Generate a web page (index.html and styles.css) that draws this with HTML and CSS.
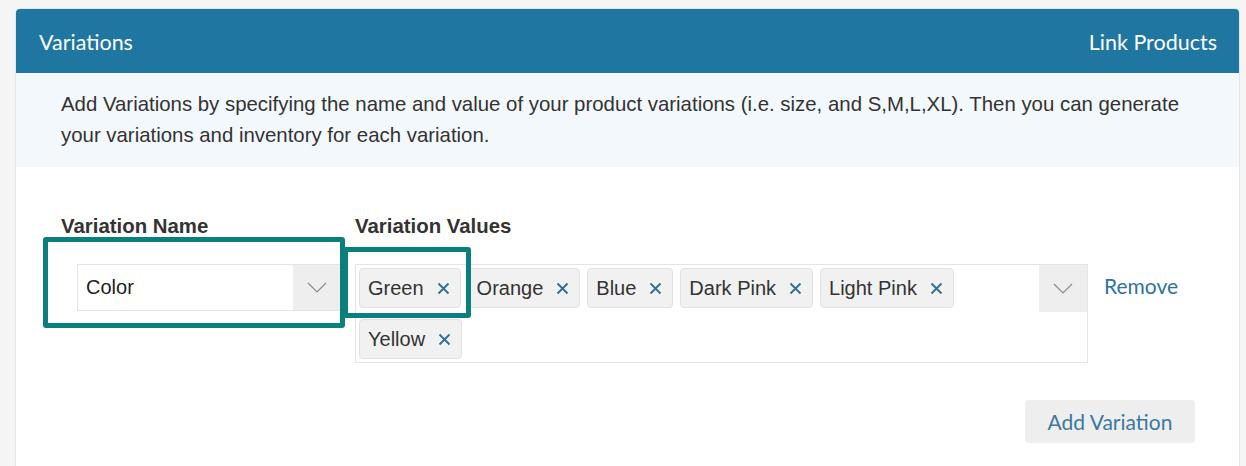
FILE: index.html
```html
<!DOCTYPE html>
<html>
<head>
<meta charset="utf-8">
<link rel="stylesheet" href="styles.css">
</head>
<body>
<div class="card">
  <div class="card-header">
    <span class="title">Variations</span>
    <span class="link">Link Products</span>
  </div>
  <div class="info">
    Add Variations by specifying the name and value of your product variations (i.e. size, and S,M,L,XL). Then you can generate your variations and inventory for each variation.
  </div>
  <div class="card-body">
    <div class="row">
      <div class="col-name">
        <div class="label">Variation Name</div>
        <div class="select">
          <span class="select-value">Color</span>
          <span class="select-arrow">
            <svg width="20" height="11" viewBox="0 0 20 11"><polyline points="1,1 10,10 19,1" fill="none" stroke="#8a8a8a" stroke-width="1.2"/></svg>
          </span>
        </div>
      </div>
      <div class="col-values">
        <div class="label">Variation Values</div>
        <div class="multi">
          <div class="tags">
            <span class="tag">Green<svg class="x" width="13" height="13" viewBox="0 0 13 13"><path d="M1.5 1.5L11.5 11.5M11.5 1.5L1.5 11.5" stroke="#2c6f93" stroke-width="1.8"/></svg></span>
            <span class="tag">Orange<svg class="x" width="13" height="13" viewBox="0 0 13 13"><path d="M1.5 1.5L11.5 11.5M11.5 1.5L1.5 11.5" stroke="#2c6f93" stroke-width="1.8"/></svg></span>
            <span class="tag">Blue<svg class="x" width="13" height="13" viewBox="0 0 13 13"><path d="M1.5 1.5L11.5 11.5M11.5 1.5L1.5 11.5" stroke="#2c6f93" stroke-width="1.8"/></svg></span>
            <span class="tag">Dark Pink<svg class="x" width="13" height="13" viewBox="0 0 13 13"><path d="M1.5 1.5L11.5 11.5M11.5 1.5L1.5 11.5" stroke="#2c6f93" stroke-width="1.8"/></svg></span>
            <span class="tag">Light Pink<svg class="x" width="13" height="13" viewBox="0 0 13 13"><path d="M1.5 1.5L11.5 11.5M11.5 1.5L1.5 11.5" stroke="#2c6f93" stroke-width="1.8"/></svg></span>
            <span class="tag">Yellow<svg class="x" width="13" height="13" viewBox="0 0 13 13"><path d="M1.5 1.5L11.5 11.5M11.5 1.5L1.5 11.5" stroke="#2c6f93" stroke-width="1.8"/></svg></span>
          </div>
          <span class="multi-arrow">
            <svg width="20" height="11" viewBox="0 0 20 11"><polyline points="1,1 10,10 19,1" fill="none" stroke="#8a8a8a" stroke-width="1.2"/></svg>
          </span>
        </div>
      </div>
      <a class="remove">Remove</a>
    </div>
    <div class="actions">
      <button class="add-btn">Add Variation</button>
    </div>
  </div>
</div>
<div class="highlight hl-name"></div>
<div class="highlight hl-green"></div>
</body>
</html>
```
FILE: styles.css
```css
html, body {
  margin: 0;
  padding: 0;
}
body {
  background: #f5f5f5;
  padding: 8px 6px 0 15px;
  font-family: "Liberation Sans", Arial, sans-serif;
  color: #333;
  position: relative;
  height: 466px;
  box-sizing: border-box;
  overflow: hidden;
}
.card {
  background: #fff;
  border: 1px solid #e2e6ea;
  border-radius: 5px;
  overflow: hidden;
  height: 600px;
}
.card-header {
  background: #1f76a0;
  height: 64px;
  padding: 1px 22px 0 23px;
  box-sizing: border-box;
  display: flex;
  align-items: center;
  justify-content: space-between;
  font-family: Lato, "Open Sans", sans-serif;
  font-size: 21.5px;
  color: #fff;
}
.info {
  background: #f3f8fc;
  padding: 16px 44px 16px 45px;
  font-size: 20.4px;
  line-height: 31px;
  color: #333;
}
.card-body {
  padding: 46px 44px 0 45px;
}
.row {
  display: flex;
  align-items: flex-start;
}
.label {
  font-weight: bold;
  font-size: 20.4px;
  line-height: 26px;
  color: #333;
  margin-bottom: 25px;
}
.col-name {
  width: 294px;
}
.select {
  margin-left: 16px;
  margin-top: 1px;
  width: 265px;
  height: 47px;
  box-sizing: border-box;
  border: 1px solid #e4e4e4;
  display: flex;
  align-items: stretch;
}
.select-value {
  flex: 1;
  padding-left: 8px;
  display: flex;
  align-items: center;
  font-size: 20px;
  color: #222;
}
.select-arrow {
  width: 48px;
  background: #eeeeee;
  display: flex;
  align-items: center;
  justify-content: center;
}
.col-values {
  width: 733px;
}
.multi {
  border: 1px solid #e4e4e4;
  min-height: 98px;
  box-sizing: border-box;
  display: flex;
  align-items: flex-start;
}
.tags {
  flex: 1;
  display: flex;
  flex-wrap: wrap;
  column-gap: 7px;
  row-gap: 11px;
  padding: 3px 3px 3px 3px;
}
.tag {
  height: 40px;
  box-sizing: border-box;
  border: 1px solid #e2e2e2;
  border-radius: 4px;
  background: #f1f1f1;
  display: inline-flex;
  align-items: center;
  padding: 0 10px 0 8px;
  font-size: 20px;
  color: #333;
}
.x {
  margin-left: 13px;
}
.multi-arrow {
  width: 48px;
  height: 47px;
  background: #eeeeee;
  display: flex;
  align-items: center;
  justify-content: center;
}
.remove {
  margin-left: 16px;
  margin-top: 60px;
  font-family: Lato, "Open Sans", sans-serif;
  font-size: 21px;
  color: #2f73a0;
}
.actions {
  display: flex;
  justify-content: flex-end;
  margin-top: 37px;
}
.add-btn {
  width: 170px;
  height: 43px;
  border: none;
  border-radius: 4px;
  background: #eeeeee;
  font-family: Lato, "Open Sans", sans-serif;
  font-size: 21px;
  color: #3a79a0;
  padding: 0;
}
.highlight {
  position: absolute;
  border: 5px solid #0b7f7c;
  border-radius: 3px;
  box-sizing: border-box;
}
.hl-name {
  left: 43px;
  top: 237px;
  width: 302px;
  height: 91px;
}
.hl-green {
  left: 343px;
  top: 247px;
  width: 128px;
  height: 71px;
}
```
